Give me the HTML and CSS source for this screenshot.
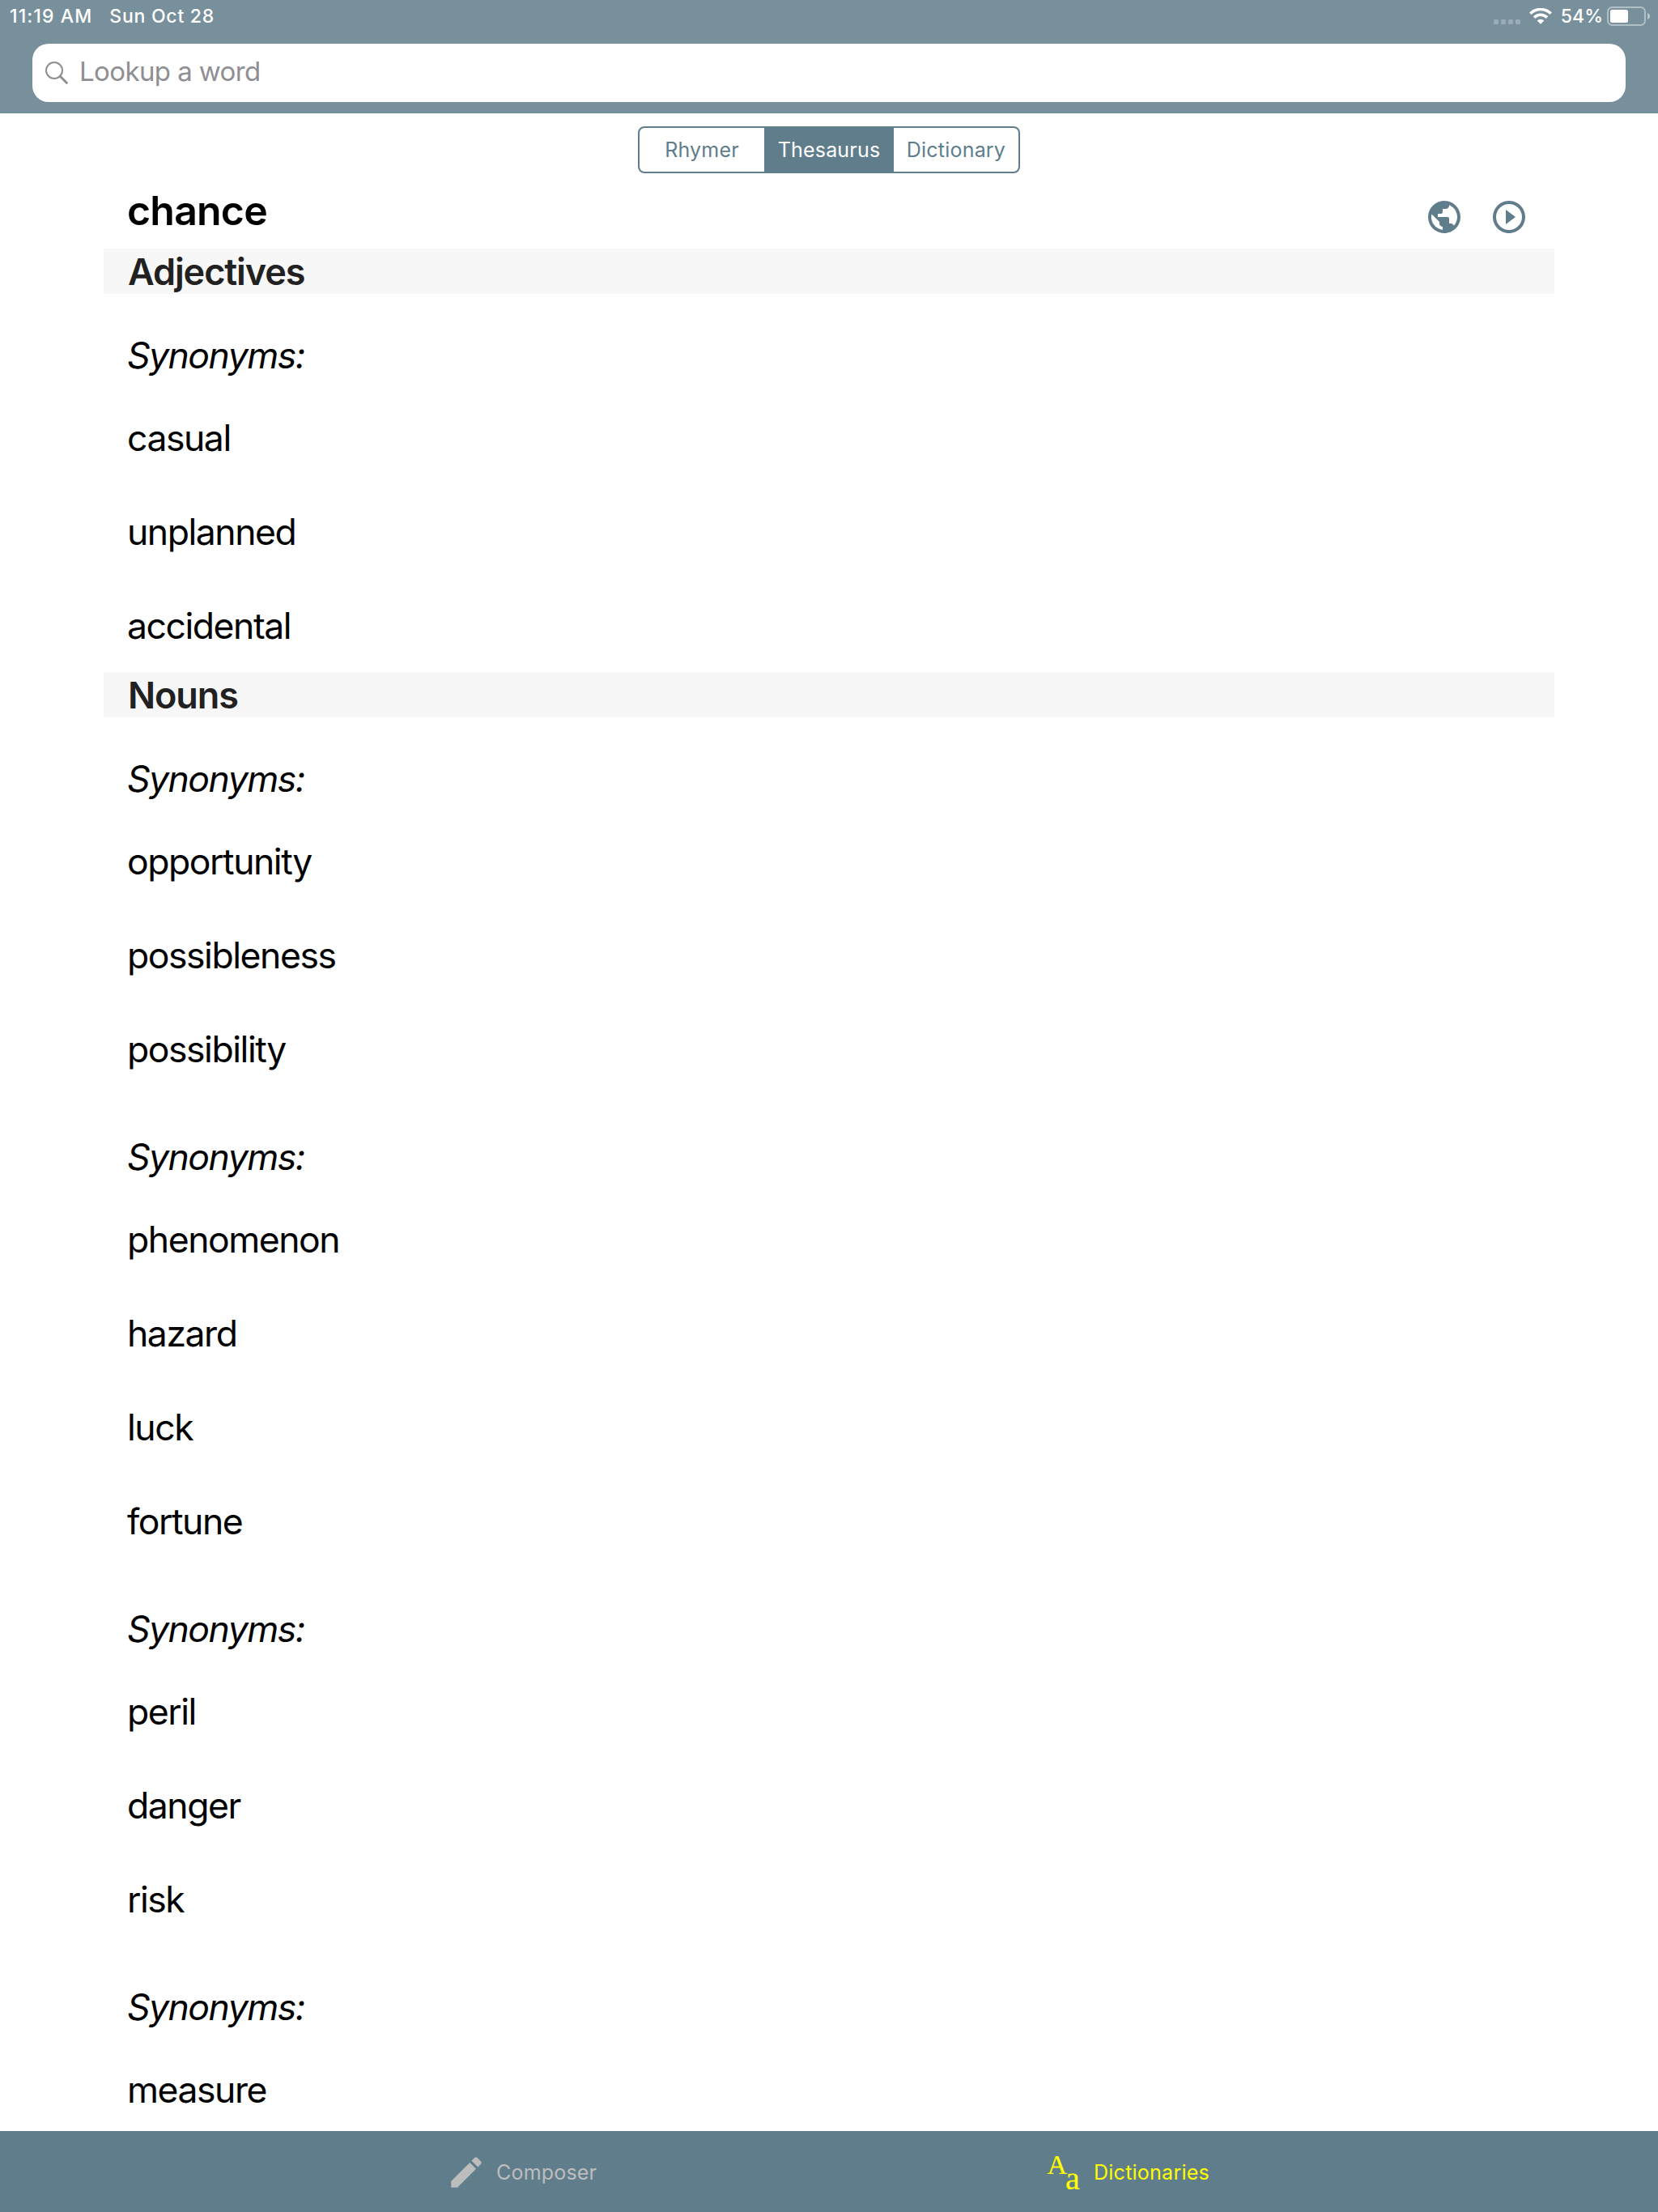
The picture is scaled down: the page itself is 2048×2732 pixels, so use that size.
FILE: index.html
```html
<!DOCTYPE html>
<html lang="en">
<head>
<meta charset="utf-8">
<title>Thesaurus</title>
<link rel="stylesheet" href="styles.css">
</head>
<body>
<div class="app">
  <header class="top">
    <div class="status">
      <span class="time">11:19 AM</span>
      <span class="date">Sun Oct 28</span>
      <svg class="signal" width="34" height="6" viewBox="0 0 34 6"><g fill="#fff" fill-opacity=".25"><rect width="6" height="6" rx="1.6"/><rect x="9" width="6" height="6" rx="1.6"/><rect x="18" width="6" height="6" rx="1.6"/><rect x="27" width="6" height="6" rx="1.6"/></g></svg>
      <svg class="wifi" width="28" height="20" viewBox="0 0 28 20"><g fill="none" stroke="#fff" stroke-width="3.6"><path d="M1.300 6.800a18 18 0 0 1 25.400 0"/><path d="M6 11.600a11.400 11.400 0 0 1 16 0"/></g><path fill="#fff" d="M9.700 15.400a6.200 6.200 0 0 1 8.600 0L14 19.800z"/></svg>
      <span class="percent">54%</span>
      <svg class="battery" width="54" height="24" viewBox="0 0 54 24"><rect x="1" y="1" width="46" height="22" rx="5.5" fill="none" stroke="#fff" stroke-opacity=".42" stroke-width="2"/><rect x="4" y="4" width="22" height="16" rx="2.5" fill="#fff"/><path fill="#fff" fill-opacity=".5" d="M50 8c4 1.500 4 6.500 0 8z"/></svg>
    </div>
    <div class="search">
      <svg class="glass" width="28" height="28" viewBox="0 0 28 28" fill="none" stroke="#8e8e93"><circle cx="11" cy="11" r="10" stroke-width="2"/><path d="M18.300 18.300l8 8" stroke-width="3" stroke-linecap="round"/></svg>
      <span class="placeholder">Lookup a word</span>
    </div>
  </header>
  <main class="content">
    <div class="tabs">
      <span class="tab">Rhymer</span>
      <span class="tab active">Thesaurus</span>
      <span class="tab">Dictionary</span>
    </div>
    <div class="title">
      <h1>chance</h1>
      <svg width="48" height="48" viewBox="0 0 24 24" fill="#607d8b"><path d="M12 2C6.480 2 2 6.480 2 12s4.480 10 10 10 10-4.480 10-10S17.520 2 12 2zm-1 17.930c-3.950-.49-7-3.850-7-7.930 0-.62.080-1.210.210-1.790L9 15v1c0 1.100.9 2 2 2v1.930zm6.900-2.540c-.26-.81-1-1.390-1.900-1.390h-1v-3c0-.55-.45-1-1-1H8v-2h2c.55 0 1-.45 1-1V7h2c1.100 0 2-.9 2-2v-.41c2.930 1.190 5 4.060 5 7.410 0 2.080-.8 3.970-2.100 5.390z"/></svg>
      <svg width="48" height="48" viewBox="0 0 24 24" fill="#607d8b"><path d="M10 16.500l6-4.500-6-4.500v9zM12 2C6.480 2 2 6.480 2 12s4.480 10 10 10 10-4.480 10-10S17.520 2 12 2zm0 18c-4.410 0-8-3.590-8-8s3.590-8 8-8 8 3.590 8 8-3.590 8-8 8z"/></svg>
    </div>
    <h2>Adjectives</h2>
    <p class="label"><i>Synonyms:</i></p>
    <p class="word">casual</p>
    <p class="word">unplanned</p>
    <p class="word">accidental</p>
    <h2>Nouns</h2>
    <p class="label"><i>Synonyms:</i></p>
    <p class="word">opportunity</p>
    <p class="word">possibleness</p>
    <p class="word">possibility</p>
    <p class="label"><i>Synonyms:</i></p>
    <p class="word">phenomenon</p>
    <p class="word">hazard</p>
    <p class="word">luck</p>
    <p class="word">fortune</p>
    <p class="label"><i>Synonyms:</i></p>
    <p class="word">peril</p>
    <p class="word">danger</p>
    <p class="word">risk</p>
    <p class="label"><i>Synonyms:</i></p>
    <p class="word">measure</p>
  </main>
  <nav class="bottom">
    <div class="item composer">
      <svg width="50" height="50" viewBox="0 0 24 24" fill="#bdbdbd"><path d="M3 17.250V21h3.750L17.810 9.940l-3.750-3.750L3 17.250zM20.710 7.040c.39-.39.39-1.020 0-1.410l-2.340-2.340c-.39-.39-1.020-.39-1.410 0l-1.830 1.830 3.750 3.750 1.830-1.830z"/></svg>
      <span>Composer</span>
    </div>
    <div class="item dictionaries">
      <svg class="letters" width="44" height="64" viewBox="0 -10 44 64"><text x="0.500" y="23.500" font-size="34">A</text><text x="23" y="42.500" font-size="40">a</text></svg>
      <span>Dictionaries</span>
    </div>
  </nav>
</div>
</body>
</html>
```
FILE: styles.css
```css
* { box-sizing: border-box; }
body {
  margin: 0;
  background: #fff;
  color: #000;
  font-family: Inter, "Liberation Sans", sans-serif;
}
svg { display: block; flex: none; }
.app {
  width: 2048px;
  height: 2732px;
  display: flex;
  flex-direction: column;
  overflow: hidden;
}
.top {
  flex: none;
  height: 140px;
  background: #78909c;
  padding: 0 40px;
}
.status {
  height: 54px;
  margin: 0 -40px;
  padding: 0 9px 14px 12px;
  display: flex;
  align-items: center;
  color: #fff;
  font-size: 23px;
  font-weight: 500;
  white-space: nowrap;
}
.time { letter-spacing: 1.1px; }
.date { margin-left: 21px; letter-spacing: 0.75px; }
.signal { margin: 14px 10px 0 auto; }
.percent { margin: 0 5px 0 11px; }
.time, .date, .percent { padding-bottom: 1px; }
.search {
  height: 72px;
  border-radius: 20px;
  background: #fff;
  display: flex;
  align-items: center;
  padding: 0 16px;
  color: #8e8e93;
  font-size: 33px;
  letter-spacing: -0.6px;
}
.glass { margin-right: 14px; }
.placeholder { padding-bottom: 5px; }
.content {
  flex: 1;
  min-height: 0;
  overflow: hidden;
  padding: 16px 128px 0;
}
.tabs {
  width: 472px;
  height: 58px;
  margin: 0 auto;
  border: 2px solid #607d8b;
  border-radius: 8px;
  display: grid;
  grid-template-columns: 154px 160px 154px;
  overflow: hidden;
  color: #607d8b;
  font-size: 25px;
  letter-spacing: 0.2px;
}
.tab { display: flex; align-items: center; justify-content: center; }
.active { background: #607d8b; color: #fff; }
.title {
  height: 93px;
  padding: 14px 32px 0 29px;
  display: flex;
  align-items: flex-start;
  gap: 32px;
}
.title h1 {
  flex: 1;
  margin: 0;
  font-size: 50px;
  line-height: 64px;
  font-weight: 600;
  letter-spacing: -0.8px;
}
.title svg { margin-top: 16px; }
h2 {
  height: 56px;
  margin: 0;
  padding-left: 30px;
  background: #f7f7f7;
  color: #212121;
  font-size: 45px;
  line-height: 57px;
  font-weight: 600;
  letter-spacing: -1.1px;
}
.label, .word {
  margin: 0;
  padding-left: 29px;
  font-size: 44.5px;
  line-height: 60px;
  letter-spacing: -1.45px;
}
.label { height: 119px; padding-top: 46px; letter-spacing: -1.5px; }
.word { height: 116px; padding-top: 29px; }
.bottom {
  flex: none;
  height: 100px;
  background: #607d8b;
  display: flex;
  padding: 2px 0 0 551px;
  font-size: 25px;
}
.item { display: flex; align-items: center; }
.composer { width: 742px; color: #bdbdbd; gap: 12px; letter-spacing: 0.2px; }
.dictionaries { color: #ff0; gap: 14px; letter-spacing: 0.25px; }
.letters {
  fill: #ff0;
  stroke: #ff0;
  stroke-width: 0.2px;
  letter-spacing: 0;
  font-family: "Liberation Serif", serif;
}
```
